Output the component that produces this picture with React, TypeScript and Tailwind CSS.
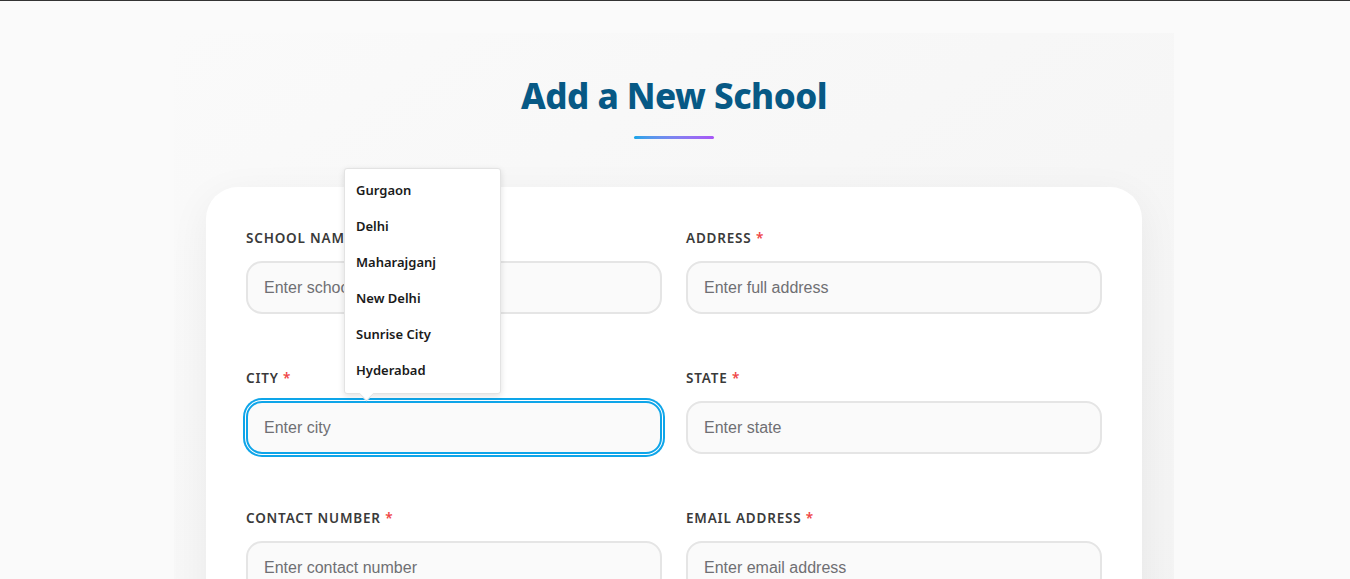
import React from 'react';

const cities = ['Gurgaon', 'Delhi', 'Maharajganj', 'New Delhi', 'Sunrise City', 'Hyderabad'];

const fields = [
  { id: 'name', label: 'School Name', placeholder: 'Enter school name' },
  { id: 'address', label: 'Address', placeholder: 'Enter full address' },
  { id: 'city', label: 'City', placeholder: 'Enter city' },
  { id: 'state', label: 'State', placeholder: 'Enter state' },
  { id: 'contact', label: 'Contact Number', placeholder: 'Enter contact number' },
  { id: 'email', label: 'Email Address', placeholder: 'Enter email address' },
];

const CityPopup = () => (
  <div className="absolute left-[98px] top-[-200px] z-20 w-[157px] rounded-[3px] border border-[#e3e3e3] bg-white py-1 shadow-[0_2px_6px_rgba(0,0,0,0.12)]">
    {cities.map((c) => (
      <div
        key={c}
        className="flex h-9 items-center px-[11px] text-[13px] font-semibold text-[#1a1a1a]"
      >
        {c}
      </div>
    ))}
    {/* little arrow pointing at the input */}
    <div className="absolute -bottom-[6px] left-[16px] h-[11px] w-[11px] rotate-45 border-b border-r border-[#e3e3e3] bg-white" />
  </div>
);

export default function App() {
  return (
    <div
      className="min-h-screen border-t border-[#333] bg-[#fafafa] pt-8"
      style={{ fontFamily: '"Noto Sans", "Open Sans", sans-serif' }}
    >
      <div className="ml-[174px] w-[1000px] bg-gradient-to-br from-[#fafafa] to-[#f3f3f3] px-8 pt-[43px] pb-16">
        <h1 className="text-center text-[35px] font-extrabold leading-10 text-[#075985] tracking-[-0.015em]">
          Add a New School
        </h1>
        <div className="mx-auto mt-[20px] h-[3px] w-20 rounded-full bg-gradient-to-r from-[#0ea5e9] to-[#a855f7]" />

        <form className="mt-12 rounded-[32px] bg-white px-10 pt-[41px] pb-10 shadow-[0_10px_40px_rgba(0,0,0,0.06)]">
          <div className="grid grid-cols-2 gap-x-6 gap-y-[54px]">
            {fields.map((f) => {
              const focused = f.id === 'city';
              return (
                <div key={f.id} className="relative">
                  <label
                    htmlFor={f.id}
                    className="mb-[13px] block h-5 text-[13.5px] font-semibold uppercase leading-5 tracking-[0.06em] text-[#3a3a3a]"
                  >
                    {f.label} <span className="text-[#ef4444]">*</span>
                  </label>
                  {focused && <CityPopup />}
                  <input
                    id={f.id}
                    placeholder={f.placeholder}
                    className={
                      focused
                        ? 'block h-[53px] w-full rounded-2xl border-2 border-[#0ea5e9] bg-[#fafafa] px-4 text-base text-[#111] outline-none ring-2 ring-[#0ea5e9] ring-offset-1 placeholder:text-[#6f6f73]'
                        : 'block h-[53px] w-full rounded-2xl border-2 border-[#e5e5e5] bg-[#fafafa] px-4 text-base text-[#111] outline-none placeholder:text-[#6f6f73]'
                    }
                    style={{ fontFamily: '"Liberation Sans", Arial, sans-serif' }}
                  />
                </div>
              );
            })}
          </div>
        </form>
      </div>
    </div>
  );
}
